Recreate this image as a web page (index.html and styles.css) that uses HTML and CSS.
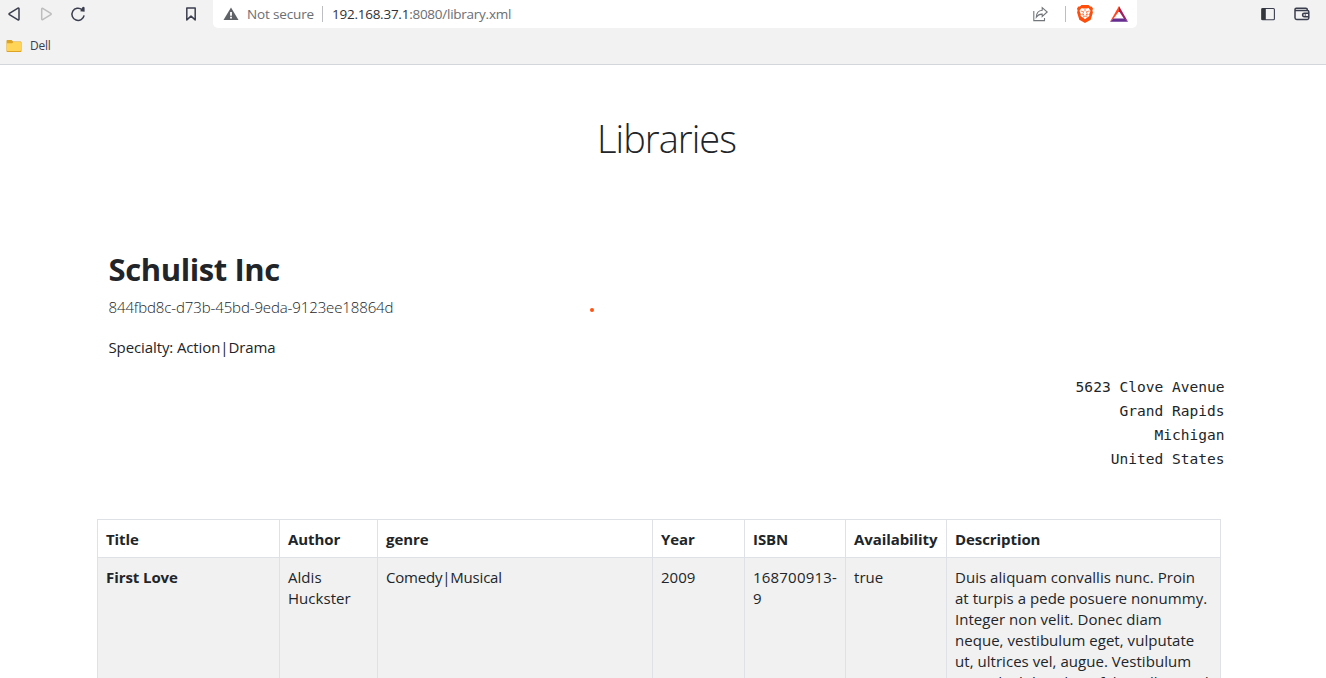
FILE: index.html
```html
<!DOCTYPE html>
<html lang="en">
<head>
<meta charset="utf-8">
<title>Libraries</title>
<link rel="stylesheet" href="styles.css">
</head>
<body>
<header class="chrome">
  <div class="toolbar">
    <nav class="nav">
      <svg width="16" height="16" viewBox="0 0 16 16"><path class="ln" d="M13 2.700v10.600c0 .6-.5.9-1 .6L3.400 8.700c-.5-.3-.5-1 0-1.300l8.600-5.300c.5-.3 1 0 1 .6z"/></svg>
      <svg width="16" height="16" viewBox="0 0 16 16"><path class="ln off" d="M3.700 3v10c0 .7.5.9 1 .6l8.100-4.900c.5-.3.5-1 0-1.300l-8.100-5c-.5-.3-1-.1-1 .6z"/></svg>
      <svg width="16" height="16" viewBox="0 0 16 16"><path class="ln" d="M12 3.600a6.100 6.100 0 1 0 2.100 5.700"/><path d="M10.200 5.200l4.400.5V1.400a1.700 1.700 0 0 0-2.600.5z" fill="#3b3e4f"/></svg>
    </nav>
    <svg class="bookmark" width="16" height="16" viewBox="0 0 16 16"><path class="ln" d="M3.800 1.900h8.400v12L8 10.100l-4.200 3.800z"/></svg>
    <div class="address">
      <svg class="warn" width="16" height="14" viewBox="0 0 16 14"><path d="M8 .5L15.500 13H.5z" fill="#5f6368"/><path d="M7.100 5h1.800v3.700H7.100zM7.100 9.800h1.800v1.600H7.100z" fill="#fff"/></svg>
      <span class="secure">Not secure</span>
      <span class="bar"></span>
      <span class="url"><b>192.168.37.1</b>:8080/library.xml</span>
      <svg class="share" width="18" height="16" viewBox="0 0 18 16"><path d="M1.800 5v9.600h10.700v-2.700M10.200 1.700l5 4.300-5 4.500V8.100c-2.600-.2-4.400.9-5.900 3.100.1-3.800 2.200-6.700 5.900-7z" fill="none" stroke="#73767a" stroke-width="1.100"/></svg>
      <span class="bar"></span>
      <svg class="lion" width="18" height="20" viewBox="0 0 18 20"><path d="M5.500 1h7l1.600 1.600 1.500-.2 1.400 2-.6 2.200.5 1.800-2.200 7.400L9 19l-5.700-3.200L1.100 8.400l.5-1.800L1 4.400l1.400-2 1.500.2z" fill="#ff4d0b"/><path d="M5.400 4L7.500 4.500h3L12.600 4l1.900 2.800-1.300 3.500.2 1.700-2.500 1.800-1.900 1.500-1.900-1.500L4.600 12l.2-1.700-1.300-3.500z" fill="#fff"/><path d="M4.700 7l3 .7-.8 1.600.9 1.900-2.200-.7M13.300 7l-3 .7.8 1.600-.9 1.900 2.200-.7M7 13l2-1 2 1M9 5v2" fill="none" stroke="#ff4d0b" stroke-width=".7"/></svg>
      <svg class="bat" width="18" height="16" viewBox="0 0 18 16"><path d="M9 0v5.300L3.600 12.600 0 15.700z" fill="#ff4724"/><path d="M9 0l9 15.700-4.200-3.100L9 5.300z" fill="#9e1f63"/><path d="M0 15.700l3.500-3.200h10.900l3.600 3.200z" fill="#662d91"/></svg>
    </div>
    <div class="tools">
      <svg width="16" height="16" viewBox="0 0 16 16"><rect x="1.800" y="2.500" width="12.600" height="11.200" rx="1" fill="none" stroke="#3b3e4f" stroke-width="1.100"/><path d="M1.500 2.300h4.300v11.600H1.500z" fill="#33353d"/></svg>
      <svg width="18" height="16" viewBox="0 0 18 16"><path class="ln" d="M2 3.300v8.500c0 1 .6 1.700 1.700 1.700h10.600c.8 0 1.500-.5 1.500-1.400V5.800c0-.8-.6-1.300-1.400-1.300H3.300c-.7 0-1.300-.3-1.300-1s.6-1.300 1.300-1.300h9.500c.9 0 1.500.5 1.500 1.400v.9M15.800 7.300h-4.300c-1.100 0-1.900.7-1.900 1.700s.8 1.700 1.900 1.700h4.300"/><circle cx="12.300" cy="9" r=".8" fill="#3b3e4f"/></svg>
    </div>
  </div>
  <div class="bookmarks">
    <svg width="16" height="14" viewBox="0 0 16 14"><path d="M.5 12V2c0-.7.400-1 1-1h4l1.600 1.500h7.200c.8 0 1.200.4 1.200 1.100V12c0 .7-.4 1-1 1h-13c-.6 0-1-.3-1-1z" fill="#dca325"/><path d="M.8 4.200h5.400l1.300-1.300h6.700c.5 0 .8.300.8.800V11c0 .600-.3.900-.8.900H1.700c-.6 0-.9-.3-.9-.9z" fill="#ffd457"/></svg>
    <span>Dell</span>
  </div>
</header>
<main class="page">
  <h1 class="title">Libraries</h1>
  <section class="library">
    <h2 class="name">Schulist Inc</h2>
    <p class="uuid">844fbd8c-d73b-45bd-9eda-9123ee18864d</p>
    <p class="specialty">Specialty: Action|Drama<i class="dot"></i></p>
    <address class="place">5623 Clove Avenue<br>Grand Rapids<br>Michigan<br>United States</address>
  </section>
  <table class="books">
    <colgroup><col class="c1"><col class="c2"><col class="c3"><col class="c4"><col class="c5"><col class="c6"><col class="c7"></colgroup>
    <thead>
      <tr><th>Title</th><th>Author</th><th>genre</th><th>Year</th><th>ISBN</th><th>Availability</th><th>Description</th></tr>
    </thead>
    <tbody>
      <tr>
        <th>First Love</th><td>Aldis<br>Huckster</td><td class="genre">Comedy|Musical</td><td>2009</td><td class="num">168700913-<br>9</td><td>true</td>
        <td>Duis aliquam convallis nunc. Proin<br>at turpis a pede posuere nonummy.<br>Integer non velit. Donec diam<br>neque, vestibulum eget, vulputate<br>ut, ultrices vel, augue. Vestibulum<br>nec odio bibendum, felis nullam sed</td>
      </tr>
    </tbody>
  </table>
</main>
</body>
</html>
```
FILE: styles.css
```css
* { box-sizing: border-box; }
html, body { height: 678px; overflow: hidden; }
body { margin: 0; background: #fff; color: #212529; font-family: "Open Sans", "Noto Sans", sans-serif; font-size: 15px; }
h1, h2, p { margin: 0; }
svg { display: block; flex: none; }
.ln { fill: none; stroke: #3b3e4f; stroke-width: 1.5; stroke-linejoin: round; }
.off { stroke: #bdbdbf; }

.chrome { height: 65px; background: #f2f2f2; border-bottom: 1px solid #d3d6da; }
.toolbar { display: flex; height: 28px; align-items: center; padding-left: 6px; }
.nav { display: flex; gap: 16px; width: 177px; }
.bookmark { margin-right: 14px; }
.address { display: flex; align-items: center; width: 924px; height: 28px; padding-left: 10px; background: #fff; border-radius: 0 0 5px 5px; color: #6b6e73; font-size: 13.5px; }
.secure { width: 75px; margin-left: 8px; white-space: nowrap; letter-spacing: -.15px; }
.bar { width: 1px; height: 16px; background: #bcbec1; }
.url { flex: 1; margin-left: 9px; letter-spacing: -.25px; }
.url b { font-weight: 400; color: #303236; }
.share { margin-right: 15px; }
.lion { margin: 0 16px 0 10px; }
.bat { margin-right: 9px; }
.tools { display: flex; gap: 17px; margin-left: 123px; }
.bookmarks { display: flex; align-items: center; gap: 8px; height: 35px; padding-left: 6px; font-size: 12px; letter-spacing: -.2px; color: #3b3e4f; }

.page { display: flex; flex-direction: column; }
.title { height: 174px; padding: 43px 0 0 7px; text-align: center; font-size: 38px; line-height: 60px; font-weight: 300; letter-spacing: -.95px; }
.library { width: 1116px; height: 280px; margin-left: 108.5px; padding-top: 10px; }
.name { font-size: 31px; line-height: 40px; font-weight: 700; letter-spacing: -.4px; }
.uuid { height: 40px; padding-top: 6px; line-height: 24px; font-weight: 340; letter-spacing: -.12px; }
.specialty { position: relative; height: 35px; padding-top: 6px; line-height: 24px; letter-spacing: -.11px; }
.dot { position: absolute; left: 481px; top: -21px; width: 4px; height: 4px; border-radius: 50%; background: #ff5413; }
.place { padding-top: 11px; font: 14.55px/24px "DejaVu Sans Mono", monospace; text-align: right; }

.books { width: 1124px; margin-left: 97px; table-layout: fixed; border-collapse: collapse; line-height: 21px; }
.books th, .books td { padding: 9px 8px 7px; border: 1px solid #dee2e6; text-align: left; vertical-align: top; white-space: nowrap; letter-spacing: .04px; }
.books th { letter-spacing: -.08px; }
.books .genre { letter-spacing: -.2px; }
.books .num { letter-spacing: .2px; }
.books tbody tr { background: #f1f1f1; }
.c1 { width: 182px; } .c2 { width: 98px; } .c3 { width: 275px; } .c4 { width: 92px; }
.c5 { width: 101px; } .c6 { width: 101px; } .c7 { width: 274px; }
```
